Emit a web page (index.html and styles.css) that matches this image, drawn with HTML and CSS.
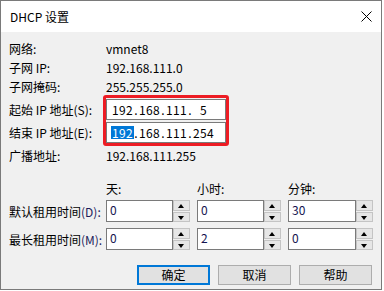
FILE: index.html
```html
<!DOCTYPE html>
<html lang="zh-CN">
<head>
  <meta charset="UTF-8" />
  <meta name="viewport" content="width=device-width, initial-scale=1" />
  <title>DHCP 设置</title>
  <link rel="stylesheet" href="styles.css">
</head>
<body>
  <div class="dialog">
    <div class="titlebar">
      <span class="title">DHCP 设置</span>
      <svg class="close" width="11" height="11" viewBox="0 0 11 11">
        <path d="M0.5 0.5 L10.5 10.5 M10.5 0.5 L0.5 10.5" stroke="#000" stroke-width="1" fill="none" />
      </svg>
    </div>

    <div class="content">
      <!-- network info -->
      <div class="row info-row"><span class="label">网络:</span><span class="value">vmnet8</span></div>
      <div class="row info-row"><span class="label">子网 IP:</span><span class="value">192.168.111.0</span></div>
      <div class="row info-row"><span class="label">子网掩码:</span><span class="value">255.255.255.0</span></div>

      <!-- address range -->
      <div class="row ip-row first">
        <span class="label">起始 IP 地址(S):</span>
        <div class="ip-box">
          <span class="field">192</span><span class="dot">.</span><span class="field">168</span><span class="dot">.</span><span class="field">111</span><span class="dot">.</span><span class="field">5</span>
        </div>
      </div>
      <div class="row ip-row">
        <span class="label">结束 IP 地址(E):</span>
        <div class="ip-box">
          <span class="field"><span class="selected">192</span></span><span class="dot">.</span><span class="field">168</span><span class="dot">.</span><span class="field">111</span><span class="dot">.</span><span class="field">254</span>
        </div>
      </div>
      <div class="row info-row broadcast"><span class="label">广播地址:</span><span class="value">192.168.111.255</span></div>

      <!-- lease times -->
      <div class="lease-grid">
        <span></span>
        <span class="col-head">天:</span>
        <span class="col-head">小时:</span>
        <span class="col-head">分钟:</span>

        <span class="lease-label">默认租用时间<span class="key">(D):</span></span>
        <div class="spin"><div class="spin-input">0</div><div class="spin-btns"><span class="up"></span><span class="down"></span></div></div>
        <div class="spin"><div class="spin-input">0</div><div class="spin-btns"><span class="up"></span><span class="down"></span></div></div>
        <div class="spin"><div class="spin-input">30</div><div class="spin-btns"><span class="up"></span><span class="down"></span></div></div>

        <span class="lease-label">最长租用时间<span class="key">(M):</span></span>
        <div class="spin"><div class="spin-input">0</div><div class="spin-btns"><span class="up"></span><span class="down"></span></div></div>
        <div class="spin"><div class="spin-input">2</div><div class="spin-btns"><span class="up"></span><span class="down"></span></div></div>
        <div class="spin"><div class="spin-input">0</div><div class="spin-btns"><span class="up"></span><span class="down"></span></div></div>
      </div>

      <div class="buttons">
        <button class="btn default">确定</button>
        <button class="btn">取消</button>
        <button class="btn">帮助</button>
      </div>
    </div>

    <!-- red annotation over the address range -->
    <div class="mark"></div>
  </div>
</body>
</html>
```

FILE: styles.css
```css
*, *::before, *::after {
  box-sizing: border-box;
}

body {
  margin: 0;
  padding: 0;
  background: #ffffff;
  font-family: 'Noto Sans CJK SC', sans-serif;
  font-size: 12px;
  color: #000;
}

.dialog {
  position: relative;
  width: 382px;
  height: 290px;
  border: 1px solid #7a7a7a;
  background: #f0f0f0;
  overflow: hidden;
}

.titlebar {
  height: 31px;
  background: #ffffff;
  display: flex;
  align-items: center;
  justify-content: space-between;
  padding: 0 9px 0 9px;
}

.title {
  font-size: 12px;
  line-height: 1;
}

.close {
  display: block;
}

.content {
  padding: 7px 0 0 8px;
}

.row {
  display: flex;
  align-items: center;
}

.label {
  width: 97px;
  flex: none;
  white-space: pre;
}

.info-row {
  height: 19px;
}

.ip-row {
  height: 21px;
  margin-top: 2px;
}

.ip-row.first {
  margin-top: 3px;
}

.ip-box {
  width: 120px;
  height: 21px;
  background: #fff;
  border: 1px solid #7a7a7a;
  display: flex;
  align-items: center;
  padding-left: 4px;
  letter-spacing: 0.3px;
}

.field {
  width: 23px;
  text-align: center;
}

.dot {
  width: 4px;
  text-align: center;
}

.selected {
  display: inline-block;
  background: #0078d7;
  color: #fff;
  padding: 0 1px;
  line-height: 13px;
}

.broadcast {
  height: 18px;
  margin-top: 3px;
}

.lease-grid {
  display: grid;
  grid-template-columns: 90px 84px 84px 85px;
  grid-template-rows: 18px 22px 22px;
  column-gap: 7px;
  row-gap: 6px;
  margin-top: 12px;
  align-items: center;
}

.lease-grid > :nth-child(-n+4) {
  margin-bottom: -6px;
}

.lease-label {
  white-space: nowrap;
}

.key {
  color: #1c1c5a;
}

.spin {
  display: flex;
  height: 22px;
}

.spin-input {
  flex: 1;
  background: #fff;
  border: 1px solid #7a7a7a;
  padding: 1px 0 0 3px;
  color: #141450;
  line-height: 16px;
}

.spin-btns {
  width: 17px;
  display: flex;
  flex-direction: column;
  gap: 1px;
}

.spin-btns span {
  flex: 1;
  background: #e6e6e6;
  border: 1px solid #c4c4c4;
  position: relative;
}

.spin-btns span::after {
  content: '';
  position: absolute;
  left: 4px;
  top: 3px;
  border-left: 3.5px solid transparent;
  border-right: 3.5px solid transparent;
}

.spin-btns .up::after {
  border-bottom: 4px solid #000;
}

.spin-btns .down::after {
  border-top: 4px solid #000;
}

.buttons {
  display: flex;
  justify-content: flex-end;
  gap: 8px;
  margin-top: 15px;
  padding-right: 9px;
}

.btn {
  width: 73px;
  height: 20px;
  background: #e1e1e1;
  border: 1px solid #adadad;
  font-family: 'Noto Sans CJK SC', sans-serif;
  font-size: 12px;
  color: #000;
  padding: 0;
  line-height: 1;
}

.btn.default {
  border: 2px solid #0078d7;
}

.mark {
  position: absolute;
  left: 102px;
  top: 94px;
  width: 126px;
  height: 51px;
  border: 3px solid #ed1c24;
  border-radius: 3px;
}
```
